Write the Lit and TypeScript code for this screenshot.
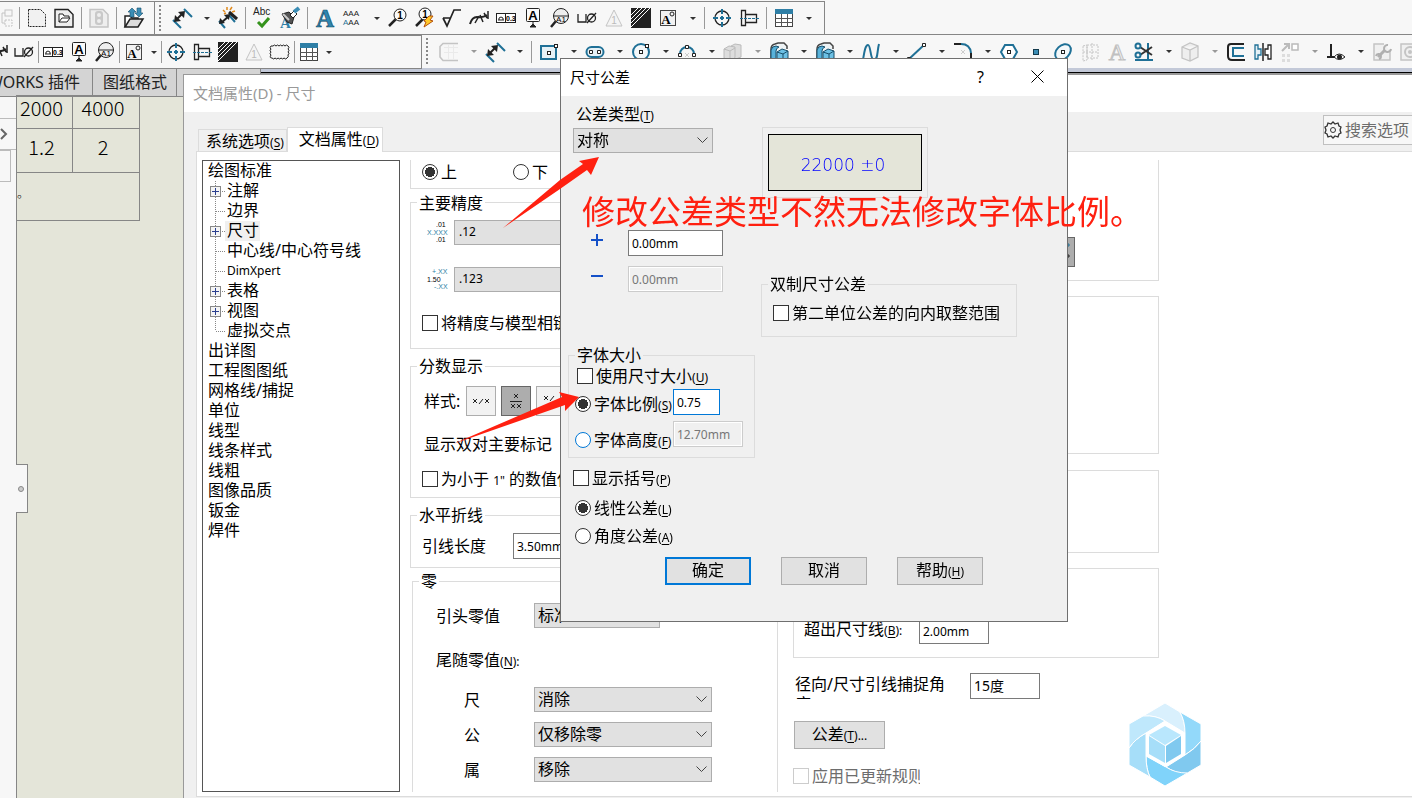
import { LitElement, html, svg, css, nothing, TemplateResult, SVGTemplateResult } from "lit";
import { customElement, property } from "lit/decorators.js";
import { classMap } from "lit/directives/class-map.js";

const BLUE = "#1f7096";
const INK = "#222";
const GREY = "#c4c4c4";

const cubes = svg`
  <path d="M3 18V8q0-4 4-5l3-1h6l3 3v3" fill="#eef3f5" stroke="#444" stroke-width="1.500"/>
  <path d="M3 18V9q1-4 5-4l3 1q-3 1-3 4v8z" fill="#58b2da" stroke="#174f6b"/>
  <path d="M9 11l5-3 6 2v7l-5 3-6-2z" fill="#6cc0e4" stroke="#174f6b"/>
  <path d="M9 11l6 2 5-3M15 13v7" fill="none" stroke="#174f6b"/>`;

const dimension = svg`
  <path d="M2 13l8 8M13 2l8 8" stroke="${BLUE}" stroke-width="2"/>
  <path d="M5 13l7-7" stroke="${INK}" stroke-width="2"/>
  <path d="M3 15l1-7 6 6zM14 4l-7 1 6 6z" fill="${INK}"/>`;

/** Glyphs of the command bars, each drawn on a 22 by 22 field. */
const ICONS: Record<string, SVGTemplateResult> = {
  tree: svg`<g fill="none" stroke="${GREY}"><rect x="14" y="3" width="7" height="6"/><path d="M14 6h-3v10h3"/><rect x="14" y="13" width="7" height="6" stroke-dasharray="2 1"/></g>`,
  select: svg`<path d="M2.500 2.500h12l5 5v12h-17z" fill="#f1f1f1" stroke="${INK}" stroke-dasharray="2 1"/>`,
  open: svg`<path d="M2 2.500h13l5 5v12.500h-18z" fill="#eee" stroke="${INK}" stroke-width="1.400"/><path d="M6 15V7h4l1 2h5v2M6 15l3-4h8l-3 4z" fill="#fff" stroke="${INK}"/>`,
  light: svg`<path d="M2 2.500h13l5 5v12.500h-18z" fill="#eee" stroke="${GREY}" stroke-width="1.500"/><rect x="7" y="4" width="8" height="14" rx="3" fill="#c9c9c9"/><circle cx="11" cy="8" r="2" fill="#eee"/><circle cx="11" cy="14" r="2" fill="#eee"/>`,
  reload: svg`<path d="M2 20V9h5l2 2h6v3" fill="#fff" stroke="${INK}" stroke-width="1.500"/><path d="M2 20l5-8h13l-5 8z" fill="#ddd" stroke="${INK}" stroke-width="1.500"/><path d="M7 10V5H5l4-4 4 4h-2v5zM14 1v5h-2l4 4 4-4h-2V1z" fill="#3b8db5" stroke="#174f6b" stroke-width=".6"/>`,
  dimension,
  wand: svg`<path d="M2 14l6 7M12 8l6 7" stroke="${BLUE}" stroke-width="2"/><path d="M4 16l8-7" stroke="${INK}" stroke-width="2"/><path d="M2 17l1-6 5 5zM13 7l-6 1 5 5z" fill="${INK}"/><path d="M12 5l8 7" stroke="${INK}" stroke-width="3"/><path d="M6 3l2 2M10 0v3M15 0l-2 3M18 4l-3 1M7 7l2-1" stroke="#e08a1e" stroke-width="1.500"/>`,
  spell: svg`<text x="1" y="8" font-size="10" fill="${INK}">Abc</text><path d="M6 15l4 4 7-8" fill="none" stroke="#35931c" stroke-width="3"/>`,
  painter: svg`<text x="1" y="21" font-size="15" font-weight="700" font-family="Liberation Serif" fill="#2f7fa6">A</text><path d="M3 7l7-2 5 5-2 7-5-2z" fill="#555" stroke="${INK}"/><path d="M4 7l6 6" stroke="#ccc" stroke-width="2"/><path d="M11 8l4-4 3 3-4 4z" fill="#fff" stroke="${INK}"/><path d="M15 5l5-4" stroke="#3b8db5" stroke-width="4"/>`,
  note: svg`<text x="11" y="20" text-anchor="middle" font-size="25" font-weight="700" font-family="Liberation Serif" fill="#2f86b0" stroke="#174f6b" stroke-width=".7">A</text>`,
  pattern: svg`<g font-size="8" fill="${INK}"><text x="2" y="9">AAA</text><text x="2" y="18"><tspan fill="${BLUE}">A</tspan>AA</text></g>`,
  balloon: svg`<path d="M2 19l7-7" stroke="${INK}" stroke-width="2.500"/><circle cx="13" cy="8" r="6" fill="#fafafa" stroke="${INK}"/><text x="13" y="12" text-anchor="middle" font-size="10" font-weight="700">1</text>`,
  autoballoon: svg`<path d="M2 19l7-7" stroke="${INK}" stroke-width="2.500"/><circle cx="11" cy="7" r="6" fill="#fafafa" stroke="${INK}"/><text x="11" y="11" text-anchor="middle" font-size="10" font-weight="700">1</text><path d="M15 9l4 0-3 4 3 1-9 6 2-5-2-1z" fill="#ffc928" stroke="#b5510c"/>`,
  finish: svg`<path d="M2 11h7M2 11l4 8 7-16h7" fill="none" stroke="${INK}" stroke-width="1.700"/>`,
  weld: svg`<path d="M2 17q2-7 7-7 6 1 10-2" fill="none" stroke="${INK}" stroke-width="2"/><path d="M7 16l4-7M12 8l3 7M16 6l3 5M20 4v8" stroke="${INK}" stroke-width="1.500"/>`,
  gtol: svg`<rect x="1.500" y="6.500" width="19" height="9" fill="#fff" stroke="${INK}"/><path d="M10.500 6v10M3 13h6M4 13v-2q2-2 4 0v2" fill="none" stroke="${INK}"/><text x="11" y="14" font-size="7" font-weight="700" font-family="Liberation Sans">0.3</text>`,
  datum: svg`<rect x="4.500" y="1.500" width="13" height="13" rx="1" fill="#fafafa" stroke="${INK}"/><text x="11" y="13" text-anchor="middle" font-size="13" font-weight="700">A</text><path d="M11 14v3M8 20l3-3 3 3z" fill="${INK}" stroke="${INK}"/>`,
  target: svg`<path d="M2 20l5-6" stroke="${INK}" stroke-width="2.500"/><circle cx="12" cy="9" r="7.500" fill="#eee" stroke="${INK}"/><path d="M4 9h16" stroke="${INK}"/><text x="12" y="15" text-anchor="middle" font-size="8" font-family="Liberation Sans">A1</text>`,
  hole: svg`<path d="M2 7v8h8V7" fill="none" stroke="${INK}" stroke-width="1.300"/><circle cx="15.500" cy="11" r="4" fill="none" stroke="${INK}" stroke-width="1.300"/><path d="M11 16l9-10" stroke="${INK}" stroke-width="1.300"/>`,
  revision: svg`<path d="M11 3l8 16H3z" fill="#f4f4f4" stroke="${GREY}"/><text x="11" y="17" text-anchor="middle" font-size="10" fill="#bbb">1</text>`,
  hatch: svg`<rect x="1" y="1" width="20" height="20" fill="${INK}"/><path d="M1 8l7-7M1 12L12 1M1 16L16 1M1 20L20 1" stroke="#fff" stroke-width="1"/>`,
  block: svg`<rect x="3.500" y="3.500" width="15" height="15" fill="#f2f2f2" stroke="#444"/><text x="9" y="17" text-anchor="middle" font-size="13" font-weight="700" font-family="Liberation Serif">A</text><circle cx="15" cy="7" r="2" fill="none" stroke="${INK}"/>`,
  centermark: svg`<circle cx="11" cy="11" r="7" fill="none" stroke="${INK}" stroke-width="1.300"/><path d="M11 2v5M11 9v4M11 15v5M2 11h5M9 11h4M15 11h5" stroke="${BLUE}" stroke-width="2"/>`,
  centerline: svg`<path d="M3.500 3.500h4v15h-4zM7.500 7.500h11v8h-11z" fill="#f5f5f5" stroke="${INK}" stroke-width="1.300"/><path d="M2 11.500h19" stroke="${BLUE}" stroke-dasharray="3 1"/>`,
  table: svg`<rect x="2.500" y="2.500" width="17" height="17" fill="#fff" stroke="#444"/><rect x="2" y="2" width="18" height="5" fill="#2f7fa6"/><path d="M2 11.500h18M2 15.500h18M8.500 7v13M14.500 7v13" stroke="#555"/>`,
  cloud: svg`<path d="M4 5q1.500-2 3 0 1.500-2 3 0 1.500-2 3 0 1.500-2 3 0 1.500-2 3 0 2 1 0 3 2 1 0 3 2 1 0 3 1 2-1 3-1 2-3 0-1 2-3 0-1 2-3 0-1 2-3 0-1 2-3 0-3 0-1-3-2-1 0-3-2-1 0-3-2-1 0-3z" fill="none" stroke="${INK}"/>`,
  sheet: svg`<path d="M20 2.500H5l-3 3V16l3 3.500h15" fill="none" stroke="${GREY}" stroke-width="1.600"/><path d="M6 6.500h14M6 11.500h14M10.500 3v16M15.500 3v16" stroke="#eaeaea"/>`,
  rect: svg`<rect x="3" y="5" width="15" height="13" fill="#e6f1f6" stroke="${BLUE}" stroke-width="2"/><rect x="9.500" y="10.500" width="3" height="3" fill="#fff" stroke="${INK}"/><rect x="16.500" y="3.500" width="3" height="3" fill="#fff" stroke="${INK}"/>`,
  slot: svg`<rect x="2.500" y="6" width="17" height="10" rx="5" fill="#e6f1f6" stroke="${BLUE}" stroke-width="2"/><path d="M5.500 9.500h3v3h-3zM13.500 9.500h3v3h-3z" fill="#fff" stroke="${INK}"/>`,
  circle: svg`<circle cx="11" cy="11" r="8" fill="#f4f8fa" stroke="${BLUE}" stroke-width="2"/><rect x="9.500" y="9.500" width="3" height="3" fill="#fff" stroke="${INK}"/><rect x="15.500" y="3.500" width="3" height="3" fill="#fff" stroke="${INK}"/>`,
  arc: svg`<path d="M4 13a7 7 0 0 1 14 0" fill="none" stroke="${BLUE}" stroke-width="2"/><path d="M2.500 12.500h3v3h-3zM16.500 12.500h3v3h-3zM9.500 4.500h3v3h-3z" fill="#fff" stroke="${INK}"/><path d="M9 12l4 4M13 12l-4 4" stroke="#ccc"/>`,
  greycube: svg`<path d="M2 8l5-3 6 1v11l-5 2-6-2zM9 5l4-2 6 1v12l-5 2" fill="#ddd" stroke="#bbb"/><path d="M2 8l6 2 5-3M8 10v9" fill="none" stroke="#bbb"/>`,
  cubes,
  spline: svg`<path d="M3 19c1-6 2-15 5-15s2 15 6 15 3-9 5-16" fill="none" stroke="${BLUE}" stroke-width="2"/>`,
  line: svg`<path d="M3 18L18 4" stroke="${BLUE}" stroke-width="2"/><path d="M16.500 2.500h3v3h-3zM1.500 16.500h3v3h-3z" fill="#fff" stroke="${INK}"/>`,
  fillet: svg`<path d="M2 3h7" stroke="${INK}" stroke-width="2"/><path d="M9 3q9 0 10 9" fill="none" stroke="${BLUE}" stroke-width="2"/><path d="M19 12v7" stroke="${INK}" stroke-width="2"/><path d="M9 9l4 4M13 9l-4 4" stroke="#ccc"/>`,
  polygon: svg`<path d="M7 4h8l4 7-4 7H7l-4-7z" fill="#fff" stroke="${BLUE}" stroke-width="2"/><rect x="9.500" y="9.500" width="3" height="3" fill="#fff" stroke="${INK}"/>`,
  point: svg`<rect x="8.500" y="8.500" width="5" height="5" fill="#3b8db5" stroke="#143b4d"/>`,
  ellipse: svg`<ellipse cx="11" cy="11" rx="9" ry="6.500" transform="rotate(-45 11 11)" fill="#f4f8fa" stroke="${BLUE}" stroke-width="2"/><rect x="9.500" y="9.500" width="3" height="3" fill="#fff" stroke="${INK}"/>`,
  plane: svg`<path d="M4 5l4-1v15l-4 1zM8 4h11v13H8zM13 2v18M4 11h15" fill="none" stroke="${GREY}" stroke-dasharray="2 1"/>`,
  greytext: svg`<text x="11" y="19" text-anchor="middle" font-size="23" font-family="Liberation Serif" fill="#eee" stroke="#c0c0c0">A</text>`,
  trim: svg`<path d="M15 2v18M2 19h18" stroke="${BLUE}" stroke-width="2"/><path d="M7 6l12 8M7 14l12-8" stroke="#333" stroke-width="2"/><circle cx="5" cy="5" r="2.500" fill="none" stroke="${BLUE}" stroke-width="2"/><circle cx="5" cy="14" r="2.500" fill="none" stroke="${BLUE}" stroke-width="2"/>`,
  greybox: svg`<path d="M3 6l8-4 8 3v11l-8 4-8-3zM3 6l8 3 8-4M11 9v11" fill="#eee" stroke="${GREY}" stroke-width="1.300"/>`,
  offset: svg`<path d="M19 3H6q-3 0-3 3v9q0 4 4 4h13" fill="none" stroke="${INK}" stroke-width="2"/><path d="M19 7H8v8h11" fill="none" stroke="${BLUE}" stroke-width="2"/>`,
  mirror: svg`<path d="M11 2v18" stroke="${INK}" stroke-width="1.500"/><path d="M3 4h3v4h3v6H6v4H3z" fill="#e6f1f6" stroke="${BLUE}" stroke-width="1.300"/><path d="M19 4h-3v4h-3v6h3v4h3z" fill="#fff" stroke="${INK}" stroke-width="1.300"/>`,
  copies: svg`<path d="M3 10l7-7M5 3h5v5" fill="none" stroke="#bbb" stroke-width="2"/><rect x="13" y="3" width="6" height="6" fill="#fff" stroke="#bbb" stroke-width="1.500"/><path d="M3 13h3v3H3zM8 13h3v3H8zM3 18h3v3H3zM8 18h3v3H8z" fill="#ddd"/>`,
  relation: svg`<path d="M6 3v13M2 16h9" stroke="${INK}" stroke-width="2"/><path d="M9 16q5-6 11 0-6 5-11 0z" fill="#fff" stroke="${INK}"/><circle cx="14.500" cy="16" r="2.500" fill="${INK}"/>`,
  repair: svg`<path d="M19 10v9H3V3h10" fill="#f0f0f0" stroke="${GREY}" stroke-width="1.500"/><path d="M7 16l7-7" stroke="#b0b0b0" stroke-width="3"/><path d="M17 4a3.500 3.500 0 1 0 3 4M8 18a2.500 2.500 0 1 0-3-3" fill="none" stroke="#b0b0b0" stroke-width="2"/>`,
  gauge: svg`<path d="M21 3H3v16h18" fill="#f0f0f0" stroke="${GREY}" stroke-width="1.500"/><circle cx="12" cy="11" r="5" fill="none" stroke="${GREY}" stroke-width="2"/><circle cx="12" cy="11" r="2" fill="${GREY}"/>`,
};

/** "|" is a divider, "v" a drop-down arrow, "x" a dimmed drop-down arrow. */
const BARS: Record<string, string[]> = {
  file: "tree | select open | light | reload".split(" "),
  annotate:
    "dimension v wand | spell painter | note pattern v balloon autoballoon finish weld gtol datum target hole revision hatch block v | centermark centerline | table v".split(" "),
  symbols:
    "weld hole | gtol datum target | block v | centermark centerline hatch revision cloud | table v".split(" "),
  sketch:
    "sheet x dimension v | rect v slot v circle v arc v greycube x cubes v cubes v spline v line v fillet v polygon point ellipse plane greytext trim v greybox x offset mirror copies x relation v repair gauge".split(" "),
};

@customElement("tool-strip")
export class ToolStrip extends LitElement {
  @property() name = "file";
  @property({ type: Boolean }) grip = false;
  @property({ type: Boolean, reflect: true }) dense = false;

  static styles = css`
    :host { display: flex; align-items: center; font-family: "Noto Sans", sans-serif; --slot: 27px; --arrow: 19px; --divider: 8px; }
    :host([dense]) { --slot: 26px; --arrow: 13px; --divider: 3px; }
    button { border: 0; padding: 0; background: none; display: flex; justify-content: center; align-items: center; height: 28px; flex: none; }
    .tool { width: var(--slot); }
    .arrow { width: var(--arrow); }
    .arrow i { border: 3px solid transparent; border-top-color: #333; border-bottom: 0; margin-left: 4px; }
    :host([dense]) .arrow i { margin-left: 0; }
    .arrow.dim i { border-top-color: #999; }
    .divider { flex: none; width: var(--divider); height: 22px; display: flex; justify-content: center; }
    .divider::before { content: ""; width: 1px; background: #999; }
    .grip { flex: none; width: 13px; height: 27px; display: flex; justify-content: center; }
    .grip::before { content: ""; width: 2px; margin-right: 3px; background: repeating-linear-gradient(#888 0 2px, transparent 2px 4px); }
    svg { width: 22px; height: 22px; flex: none; overflow: visible; }
  `;

  render() {
    return html`
      ${this.grip ? html`<span class="grip"></span>` : nothing}
      ${BARS[this.name].map((t) =>
        t === "|"
          ? html`<span class="divider"></span>`
          : t === "v" || t === "x"
            ? html`<button class=${classMap({ arrow: true, dim: t === "x" })} aria-label="more"><i></i></button>`
            : html`<button class="tool" aria-label=${t}><svg viewBox="0 0 22 22">${ICONS[t]}</svg></button>`,
      )}`;
  }
}

interface Node { label: string; child?: boolean; open?: boolean; on?: boolean; last?: boolean; latin?: boolean }

const TREE: Node[] = [
  { label: "绘图标准" },
  { label: "注解", child: true, open: true },
  { label: "边界", child: true },
  { label: "尺寸", child: true, open: true, on: true },
  { label: "中心线/中心符号线", child: true },
  { label: "DimXpert", child: true, latin: true },
  { label: "表格", child: true, open: true },
  { label: "视图", child: true, open: true },
  { label: "虚拟交点", child: true, last: true },
  ...["出详图", "工程图图纸", "网格线/捕捉", "单位", "线型", "线条样式", "线粗", "图像品质", "钣金", "焊件"].map((label) => ({ label })),
];

const key = (k: string, tail = "") => html`<small class="key">(<u>${k}</u>)${tail}</small>`;

const check = (text: unknown, disabled = false) =>
  html`<label class=${classMap({ opt: true, off: disabled })}><input type="checkbox" ?disabled=${disabled} />${text}</label>`;

const radio = (name: string, text: unknown, on = false, hot = false) =>
  html`<label class="opt"><input type="radio" class=${classMap({ hot })} name=${name} ?checked=${on} />${text}</label>`;

const combo = (label: string, options: string[], cls = ""): TemplateResult => html`
  <span class="combo ${cls}">
    <select aria-label=${label}>${options.map((o) => html`<option>${o}</option>`)}</select>
    <svg viewBox="0 0 11 7"><path d="M.500 .500l5 5 5-5" fill="none" stroke="#444" /></svg>
  </span>`;

@customElement("app-root")
export class AppRoot extends LitElement {
  static styles = css`
    :host {
      display: flex; flex-direction: column; position: relative; height: 100vh; overflow: hidden; box-sizing: border-box;
      font: 16px/20px "Noto Sans", "Noto Sans CJK SC", sans-serif; color: #000; background: #f7f7f7;
    }
    *, *::before { box-sizing: border-box; }
    button, input, select { font: inherit; color: inherit; margin: 0; border-radius: 0; }
    .key { font-size: 12px; line-height: 0; }
    u { text-underline-offset: 2px; }

    /* command bars */
    .bar { display: flex; flex: none; }
    .bar.top { height: 35px; border-bottom: 1px solid #868686; }
    .top .file, .top .annotate { border-top: 1px solid #868686; border-right: 1px solid #868686; margin-top: 1px; }
    .top .file { margin-left: -12px; padding-right: 7px; }
    .top .annotate { padding-right: 8px; }
    .bar.second { height: 34px; overflow: hidden; }
    .second .symbols { flex: none; width: 437px; margin-left: -15px; border: 1px solid #868686; border-width: 1px 1px 1px 0; }
    .second .sketch { flex: 1; border-bottom: 1px solid #c3c9d8; }

    /* drawing area */
    .tabs { display: flex; flex: none; height: 28px; }
    .tabs a { display: flex; align-items: center; height: 28px; background: #d4d4d4; border: 1px solid #868686; border-width: 0 1px 1px 0; color: #222; text-decoration: none; white-space: nowrap; padding-bottom: 2px; }
    .tabs a:nth-child(1) { width: 93px; justify-content: flex-end; padding-right: 12px; overflow: hidden; }
    .tabs a:nth-child(2) { padding: 0 9px 2px 10px; }
    .tabs a:nth-child(3) { width: 84px; }
    .edge { flex: 1; height: 5px; border-top: 3px solid #c3c9d8; border-bottom: 1px solid #999; background: #000; }
    .work { display: flex; flex: 1; min-height: 0; }
    .rail { flex: none; width: 17px; border-right: 1px solid #868686; display: flex; flex-direction: column; color: #666; }
    .rail .lid { height: 22px; border-bottom: 1px solid #bbb; }
    .rail button { height: 31px; padding: 0; border: 0; border-bottom: 1px solid #bbb; background: none; display: flex; align-items: center; }
    .rail .pane { height: 32px; width: 11px; border: 1px solid #bbb; border-width: 1px 1px 1px 0; }
    .rail svg { width: 8px; height: 12px; }
    .canvas { flex: 1; background: #e4e5d9; }
    .drawn { border-collapse: collapse; font: 300 20px/24px "Noto Sans CJK SC", sans-serif; margin-left: -1px; margin-top: -2px; }
    .drawn td { border: 1px solid #868686; padding: 0 6px 8px 0; text-align: center; height: 44px; width: 67px; }
    .drawn tr:first-child td { height: 32px; }
    .drawn td:first-child { width: 56px; }
    .drawn tr:last-child td { height: 48px; text-align: left; font-size: 12px; }
    .split { position: absolute; left: 16px; top: 464px; width: 12px; height: 49px; background: #f7f7f7; border: 1px solid #868686; border-left: 0; display: flex; align-items: center; }
    .split::before { content: ""; width: 6px; height: 6px; border: 1px solid #888; border-radius: 50%; background: #ccc; margin-left: 2px; }

    /* options window */
    .options { position: absolute; left: 183px; top: 74px; right: 0; bottom: 0; display: flex; flex-direction: column; background: #f0f0f0; border: 1px solid #999; border-width: 1px 0 0 1px; }
    h1, h2 { margin: 0; font-size: 15px; font-weight: 400; line-height: 20px; flex: 1; }
    .caption { display: flex; align-items: center; background: #fff; height: 37px; padding: 0 1px 2px 9px; flex: none; }
    .options .caption { color: #999; }
    .head { display: flex; justify-content: space-between; align-items: flex-end; height: 39px; padding-left: 14px; flex: none; }
    .pages { display: flex; align-items: flex-end; }
    .pages button { border: 1px solid #dcdcdc; border-bottom: 0; background: #f0f0f0; padding: 0 2px 0 7px; height: 22px; line-height: 20px; white-space: nowrap; }
    .pages .now { background: #fff; height: 25px; padding: 0 3px 2px 11px; margin-bottom: -1px; z-index: 1; }
    .search { display: flex; align-items: center; gap: 3px; align-self: flex-start; margin-top: 3px; width: 89px; height: 30px; border: 1px solid #c0c0c0; border-right: 0; background: #f7f7f7; }
    .search svg { width: 18px; height: 18px; flex: none; }
    .search input { width: 67px; padding: 0; border: 0; background: none; outline: 0; }
    .search input::placeholder { color: #6d6d6d; opacity: 1; }
    .page { flex: 1; min-height: 0; display: flex; gap: 10px; margin: 0 0 1px 12px; padding: 8px 0 4px 5px; background: #fff; border: 1px solid #dcdcdc; border-right: 0; }
    .tree { flex: none; width: 198px; margin: 0; padding: 0; list-style: none; border: 1px solid #555; }
    .tree li { display: flex; align-items: center; height: 20px; padding-left: 5px; }
    .tree .child { padding-left: 7px; }
    .tree svg { width: 15px; height: 20px; flex: none; }
    .tree span { padding: 0 0 2px 0; line-height: 18px; }
    .tree .child span { padding: 0 1px 2px 2px; }
    .tree .on span { background: #f0f0f0; }
    .tree .latin span { font-size: 12px; padding-bottom: 0; }

    fieldset { margin: 0; padding: 0; min-width: 0; border: 1px solid #dcdcdc; }
    legend { margin-left: 6px; padding: 0 2px; line-height: 20px; height: 20px; }
    .opt { display: flex; align-items: center; gap: 3px; height: 20px; white-space: nowrap; }
    .opt.off { color: #6d6d6d; }
    .opt input { appearance: none; flex: none; width: 16px; height: 16px; border: 1px solid #333; background: #fff; }
    .opt input[type="radio"] { border-radius: 50%; }
    .opt input:checked { background: radial-gradient(circle, #333 0 5px, #fff 5px); }
    .opt input.hot { border-color: #0078d7; }
    .opt input:disabled { border-color: #ccc; }
    .combo { position: relative; display: block; height: 25px; width: 140px; }
    .combo select { appearance: none; width: 100%; height: 100%; padding: 0 4px 1px 3px; border: 1px solid #adadad; background: #e1e1e1; outline: 0; }
    .combo.num select { font-size: 12px; padding-left: 4px; }
    .combo svg { position: absolute; right: 5px; top: 9px; width: 11px; height: 7px; }
    .wide { width: 178px; }
    .short { width: 126px; }
    .field { width: 70px; height: 26px; padding: 0 3px; border: 1px solid #7a7a7a; background: #fff; font-size: 12px; outline: 0; }
    .field:disabled { color: #777; border-color: #ccc; background: #f0f0f0; box-shadow: inset 0 0 0 1px #fff; }
    .field.angle { font-size: 14px; padding-bottom: 2px; }
    .push { height: 28px; width: 86px; padding: 0 0 2px; border: 1px solid #adadad; background: #e1e1e1; }
    .push.main { border: 2px solid #0078d7; }

    .mid, .right { flex: none; display: flex; flex-direction: column; overflow: hidden; }
    .mid { width: 368px; }
    .right { width: 366px; margin-left: 5px; }
    .cut { border-top: 0; }
    .side { display: flex; height: 29px; padding: 2px 11px; }
    .side .opt { width: 91px; }
    .precision { margin-top: 4px; height: 158px; }
    .precision .row { display: flex; align-items: center; gap: 7px; padding-left: 16px; margin: 7px 0 22px; }
    .precision svg { width: 20px; height: 24px; overflow: visible; font: 7px "Liberation Sans", sans-serif; }
    .precision .combo svg { width: 11px; height: 7px; }
    .precision .opt { padding-left: 11px; margin-top: -1px; }
    .fraction { margin-top: 7px; height: 143px; padding-left: 11px; }
    .fraction legend { margin-left: -5px; }
    .styles { display: flex; align-items: center; gap: 5px; padding: 10px 2px 0; white-space: nowrap; }
    .styles span { width: 37px; }
    .styles button { width: 30px; height: 30px; padding: 0; border: 1px solid #adadad; background: #f2f2f2; }
    .styles .down, .right .down { background: #adadad; border-color: #666; }
    .styles svg, .upper svg { display: block; width: 28px; height: 28px; }
    .dual { margin: 18px 2px 15px; }
    .jog { margin-top: 7px; height: 63px; }
    .jog label { display: flex; align-items: center; padding: 8px 11px; }
    .jog span { width: 91px; }
    .zero { margin: 3px 0 0 2px; flex: 1; border-bottom: 0; }
    .zero label { display: grid; grid-template-columns: 98px auto; align-items: center; padding-left: 23px; }
    .zero .lead { padding-top: 12px; }
    .zero .trail { margin: 22px 0 17px 23px; }
    .zero .sub span:first-child { padding-left: 28px; }
    .zero .sub { margin-bottom: 10px; }

    .upper { height: 121px; padding: 77px 83px 0 0; display: flex; justify-content: flex-end; }
    .upper button { width: 30px; height: 30px; padding: 0; border: 1px solid #666; }
    .arrows { margin-top: 15px; height: 158px; }
    .break { margin-top: 16px; height: 83px; }
    .extend { margin-top: 15px; height: 90px; padding-top: 49px; }
    .extend label, .snap { display: flex; align-items: center; }
    .extend label span { width: 125px; padding: 0 0 4px 10px; }
    .snap { margin-top: 15px; flex: none; }
    .snap span { width: 177px; height: 25px; padding: 0 25px 0 2px; overflow: hidden; }
    .tol { width: 91px; margin: 22px 0 17px 1px; flex: none; }
    .rules { width: 127px; overflow: hidden; flex: none; }

    /* tolerance window */
    .tolerance { position: absolute; left: 560px; top: 58px; width: 508px; height: 564px; background: #f0f0f0; border: 1px solid #6f6f6f; }
    .tolerance .caption button { width: 57px; height: 35px; padding: 0; border: 0; background: none; }
    .caption svg { width: 13px; height: 13px; display: block; margin: 0 auto; }
    .cols { display: grid; grid-template-columns: 187px 256px; gap: 6px; padding: 8px 0 0 7px; }
    .kind { display: block; padding-left: 5px; }
    .kind .name { padding-left: 3px; display: block; margin-bottom: 4px; }
    .bounds { margin: 77px 0 53px 22px; display: grid; gap: 10px; }
    .bounds label { display: flex; align-items: center; gap: 24px; }
    .bounds svg { width: 14px; height: 14px; margin-bottom: 6px; }
    .bounds .field { width: 95px; }
    .font { height: 113px; padding-left: 6px; }
    .font legend { margin-left: 0; }
    .font > .opt { padding-left: 2px; margin: 1px 0 3px; }
    .font .pair { display: flex; height: 32px; }
    .pair .opt { width: 98px; overflow: hidden; margin-top: 5px; }
    .pair.low .opt { margin-top: 9px; }
    .pair .now { width: 47px; border-color: #0078d7; }
    .more { display: grid; gap: 8px; padding: 10px 0 0 7px; }
    .more .opt:first-child { margin: 0 0 2px -2px; }
    .preview { margin: 23px 0 0 1px; height: 71px; border: 1px solid #dcdcdc; width: 166px; padding: 6px 5px; }
    .preview output { display: flex; align-items: center; justify-content: center; height: 57px; background: #e4e5d9; border: 1px solid #000; color: #00f; font: 200 17px/20px "DejaVu Sans", sans-serif; padding: 4px 4px 0 0; }
    .dual-tol { margin-top: 76px; height: 63px; padding: 9px 11px; }
    .dual-tol legend { margin-left: -5px; }
    .actions { display: flex; gap: 30px; padding: 11px 0 0 104px; }

    .mark { position: absolute; left: 450px; top: 150px; width: 160px; height: 300px; pointer-events: none; }
    .remark { position: absolute; left: 582px; top: 192px; margin: 0; font-size: 33px; line-height: 40px; color: #ff2010; white-space: nowrap; }
    .logo { position: absolute; right: 210px; bottom: 12px; width: 73px; height: 83px; }
  `;

  firstUpdated() {
    const box = this.renderRoot.querySelector<HTMLInputElement>(".now.field");
    box?.focus();
    box?.setSelectionRange(box.value.length, box.value.length);
  }

  private branch(n: Node) {
    return svg`<path d="M5.500 0V${n.last ? 10 : 20}M6 10.500h9" fill="none" stroke="#888" stroke-dasharray="1 1"/>
      ${n.open ? svg`<rect x=".5" y="5.500" width="10" height="10" fill="#f4f4f4" stroke="#888"/><path d="M2 10.500h7M5.500 7v7" stroke="#2a3f8f"/>` : nothing}`;
  }

  private optionsWindow() {
    return html`
      <section class="options">
        <header class="caption"><h1>文档属性(D) - 尺寸</h1></header>
        <div class="head">
          <nav class="pages">
            <button>系统选项${key("S")}</button><button class="now">文档属性${key("D")}</button>
          </nav>
          <label class="search">
            <svg viewBox="0 0 18 18" fill="none" stroke="#333"><path d="M9 1l2 2 3-1 1 3 2 1-1 3 1 3-2 1-1 3-3-1-2 2-2-2-3 1-1-3-2-1 1-3-1-3 2-1 1-3 3 1z" stroke-width="1.300"/><circle cx="9" cy="9" r="2.500"/></svg>
            <input placeholder="搜索选项" aria-label="搜索选项" />
          </label>
        </div>
        <div class="page">
          <ul class="tree">
            ${TREE.map((n) => html`<li class=${classMap({ child: !!n.child, on: !!n.on, latin: !!n.latin })}>
              ${n.child ? html`<svg viewBox="0 0 15 20">${this.branch(n)}</svg>` : nothing}<span>${n.label}</span></li>`)}
          </ul>
          <div class="mid">
            <fieldset class="cut side">${radio("side", "上", true)}${radio("side", "下")}</fieldset>
            <fieldset class="precision">
              <legend>主要精度</legend>
              <div class="row">
                <svg viewBox="0 0 20 24"><text x="9" y="7">.01</text><text x="0" y="15" fill="#2f7fa6">X.XXX</text><text x="9" y="22">.01</text></svg>
                ${combo("主要精度", [".12"], "num")}
              </div>
              <div class="row">
                <svg viewBox="0 0 20 24"><text x="5" y="7" fill="#2f7fa6">+.XX</text><text x="0" y="15">1.50</text><text x="7" y="22" fill="#2f7fa6">-.XX</text></svg>
                ${combo("公差精度", [".123"], "num")}
              </div>
              ${check("将精度与模型相链接")}
            </fieldset>
            <fieldset class="fraction">
              <legend>分数显示</legend>
              <div class="styles">
                <span>样式:</span>
                <button aria-label="x/x"><svg viewBox="0 0 28 28" stroke="#222" fill="none"><path d="M6 12l4 4M10 12l-4 4M12 17l4-5M18 12l4 4M22 12l-4 4"/></svg></button>
                <button class="down" aria-label="x over xx"><svg viewBox="0 0 28 28" stroke="#222" fill="none"><path d="M12 7l4 4M16 7l-4 4M8 14.500h12M9 17l4 4M13 17l-4 4M15 17l4 4M19 17l-4 4"/></svg></button>
                <button aria-label="x/xx"><svg viewBox="0 0 28 28" stroke="#222" fill="none"><path d="M7 9l4 4M11 9l-4 4M13 14l4-5M18 14l4 4M22 14l-4 4"/></svg></button>
              </div>
              <div class="dual">显示双对主要标记</div>
              ${check(html`<span>为小于 <small class="key">1"</small> 的数值使用</span>`)}
            </fieldset>
            <fieldset class="jog">
              <legend>水平折线</legend>
              <label><span>引线长度</span><input class="field" value="3.50mm" /></label>
            </fieldset>
            <fieldset class="zero">
              <legend>零</legend>
              <label class="lead"><span>引头零值</span>${combo("引头零值", ["标准"], "short")}</label>
              <div class="trail">尾随零值${key("N", ":")}</div>
              <label class="sub"><span>尺</span>${combo("尺", ["消除"], "wide")}</label>
              <label class="sub"><span>公</span>${combo("公", ["仅移除零"], "wide")}</label>
              <label class="sub"><span>属</span>${combo("属", ["移除"], "wide")}</label>
            </fieldset>
          </div>
          <div class="right">
            <fieldset class="cut upper"><button class="down" aria-label="文字位置"><svg viewBox="0 0 28 28"><path d="M20 7h4M22 5v4" stroke="#1f7096"/><path d="M20 18h4M22 16v4" stroke="#222"/></svg></button></fieldset>
            <fieldset class="arrows"></fieldset>
            <fieldset class="break"></fieldset>
            <fieldset class="extend"><label><span>超出尺寸线${key("B", ":")}</span><input class="field" value="2.00mm" /></label></fieldset>
            <label class="snap"><span>径向/尺寸引线捕捉角度</span><input class="field angle" value="15度" /></label>
            <button class="push tol">公差${key("T", "...")}</button>
            <div class="rules">${check("应用已更新规则", true)}</div>
          </div>
        </div>
      </section>`;
  }

  private toleranceWindow() {
    return html`
      <section class="tolerance">
        <header class="caption">
          <h2>尺寸公差</h2>
          <button aria-label="帮助">?</button>
          <button aria-label="关闭"><svg viewBox="0 0 13 13"><path d="M.500 .500l12 12M12.500 .500l-12 12" stroke="#000" /></svg></button>
        </header>
        <div class="cols">
          <div>
            <label class="kind"><span class="name">公差类型${key("T")}</span>${combo("公差类型", ["对称"])}</label>
            <div class="bounds">
              <label><svg viewBox="0 0 14 14"><path d="M7 1v12M1 7h12" stroke="#1450c8" stroke-width="2" /></svg><input class="field" aria-label="上限" value="0.00mm" /></label>
              <label><svg viewBox="0 0 14 14"><path d="M1 7h12" stroke="#1450c8" stroke-width="2" /></svg><input class="field" aria-label="下限" value="0.00mm" disabled /></label>
            </div>
            <fieldset class="font">
              <legend>字体大小</legend>
              ${check(html`<span>使用尺寸大小${key("U")}</span>`)}
              <div class="pair">${radio("font", html`<span>字体比例${key("S")}</span>`, true)}<input class="field now" aria-label="字体比例" value="0.75" /></div>
              <div class="pair low">${radio("font", html`<span>字体高度${key("F")}</span>`, false, true)}<input class="field" aria-label="字体高度" value="12.70mm" disabled /></div>
            </fieldset>
            <div class="more">
              ${check(html`<span>显示括号${key("P")}</span>`)}
              ${radio("form", html`<span>线性公差${key("L")}</span>`, true)}
              ${radio("form", html`<span>角度公差${key("A")}</span>`)}
            </div>
          </div>
          <div>
            <div class="preview"><output>22000 ±0</output></div>
            <fieldset class="dual-tol">
              <legend>双制尺寸公差</legend>
              ${check("第二单位公差的向内取整范围")}
            </fieldset>
          </div>
        </div>
        <div class="actions">
          <button class="push main">确定</button>
          <button class="push">取消</button>
          <button class="push">帮助${key("H")}</button>
        </div>
      </section>`;
  }

  render() {
    return html`
      <div class="bar top">
        <tool-strip class="file" name="file"></tool-strip>
        <tool-strip class="annotate" name="annotate" grip></tool-strip>
      </div>
      <div class="bar second">
        <tool-strip class="symbols" name="symbols" dense></tool-strip>
        <tool-strip class="sketch" name="sketch" grip></tool-strip>
      </div>
      <nav class="tabs"><a href="#addins">SOLIDWORKS 插件</a><a href="#sheet">图纸格式</a><a href="#more"></a><span class="edge"></span></nav>
      <main class="work">
        <aside class="rail">
          <span class="lid"></span>
          <button aria-label="展开"><svg viewBox="0 0 8 12"><path d="M1 1l5 5-5 5" fill="none" stroke="#666" stroke-width="2" /></svg></button>
          <span class="pane"></span>
        </aside>
        <div class="canvas">
          <table class="drawn">
            <tr><td>2000</td><td>4000</td></tr>
            <tr><td>1.2</td><td>2</td></tr>
            <tr><td colspan="2">。</td></tr>
          </table>
        </div>
      </main>
      <div class="split"></div>
      ${this.optionsWindow()} ${this.toleranceWindow()}
      <svg class="mark" viewBox="450 150 160 300" fill="#ff2010">
        <path d="M503 228L560 180 583 164 579 161 599 157 591 175 587 170 560 189z" />
        <path d="M453 444L562 397 559 392 579 397 565 411 565 405z" />
      </svg>
      <p class="remark">修改公差类型不然无法修改字体比例。</p>
      <svg class="logo" viewBox="0 0 73 83">
        <g stroke="#fff" stroke-width="1">
          <path d="M14 13L36 0 51 9Q56 18 56 30L36 18Q27 12 14 13z" fill="#d9f0fd" />
          <path d="M51 9L72 21V38Q66 46 56 52V30Q56 18 51 9z" fill="#93d9fa" />
          <path d="M72 38V62L55 72Q46 70 37 64L56 52Q66 46 72 38z" fill="#80c9ef" />
          <path d="M55 72L36 83 21 74Q17 66 17 53L37 64Q46 70 58 70z" fill="#80d3fa" />
          <path d="M21 74L0 62V45Q6 36 17 30V53Q17 66 21 74z" fill="#a6def9" />
          <path d="M0 45V21L14 13Q27 12 36 18L17 30Q6 36 0 45z" fill="#bfe8fc" />
        </g>
        <path d="M36 18L56 30V52L36 64 17 53V30z" fill="#fff" />
        <path d="M36 23L52 32 36 42 20 32z" fill="#b9e7fd" />
        <path d="M20 33L36 43V60L20 51z" fill="#a6def9" />
        <path d="M52 33L37 43V60L52 51z" fill="#80c9ef" />
      </svg>`;
  }
}
